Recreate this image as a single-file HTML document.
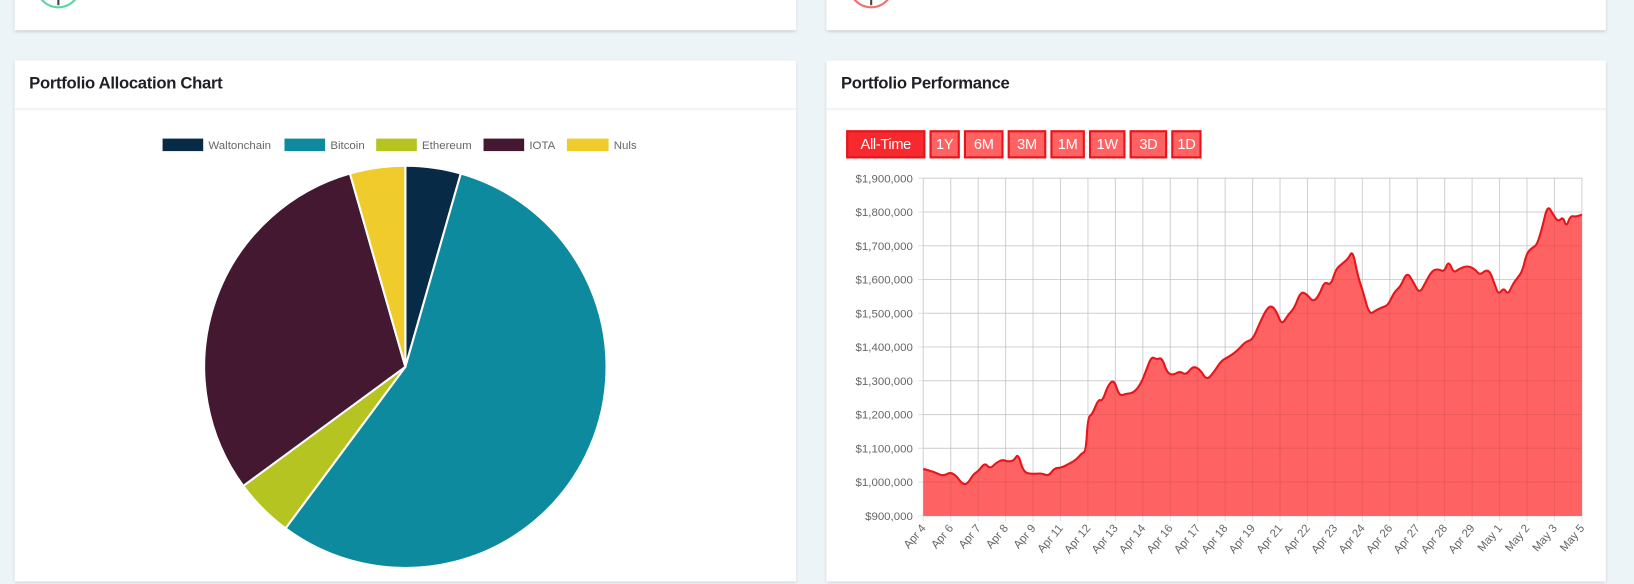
<!DOCTYPE html>
<html><head><meta charset="utf-8"><style>
html,body{margin:0;padding:0;width:1634px;height:545px;overflow:hidden;background:#edf4f8;}
#w{position:absolute;left:0;top:0;width:1568px;height:560px;transform:scale(1.04209);transform-origin:0 0;font-family:"Liberation Sans",sans-serif;}
.card{position:absolute;background:#fff;box-shadow:0 1px 3px rgba(0,0,0,.18);}
.hd{position:absolute;left:0;right:0;top:0;height:46px;border-bottom:1px solid #e8ecef;box-shadow:0 1px 2px rgba(0,0,0,.04);}
.hd span{position:absolute;left:14px;top:14px;font-weight:bold;font-size:16px;color:#1f1f26;letter-spacing:-0.3px;}
.btn{position:absolute;top:125px;height:27px;border:2px solid #e8141a;background:#ff6262;color:#fff;font-size:14px;line-height:23px;text-align:center;box-sizing:border-box;letter-spacing:-0.3px;}
</style></head><body><div id="w">
<div class="card" style="left:14px;top:-20px;width:750px;height:49px;overflow:hidden">
<svg width="120" height="49" style="position:absolute;left:0;top:0"><circle cx="42" cy="6" r="21" fill="none" stroke="#5bd6a0" stroke-width="2"/><rect x="41" y="20" width="2" height="5" fill="#444"/></svg></div>
<div class="card" style="left:793px;top:-20px;width:748px;height:49px;overflow:hidden">
<svg width="120" height="49" style="position:absolute;left:0;top:0"><circle cx="43" cy="6" r="21" fill="none" stroke="#f07070" stroke-width="2"/><rect x="42" y="20" width="2" height="5" fill="#444"/></svg></div>

<div class="card" style="left:14px;top:58px;width:750px;height:500px;overflow:hidden">
<div class="hd"><span>Portfolio Allocation Chart</span></div></div>
<div class="card" style="left:793px;top:58px;width:748px;height:500px;overflow:hidden">
<div class="hd"><span>Portfolio Performance</span></div></div>

<svg width="1568" height="560" style="position:absolute;left:0;top:0" font-family="Liberation Sans,sans-serif">
<g font-size="11" fill="#666">
<rect x="156" y="133" width="39" height="12" fill="#072a47"/><text x="200" y="143">Waltonchain</text>
<rect x="273" y="133" width="39" height="12" fill="#0e8a9f"/><text x="317" y="143">Bitcoin</text>
<rect x="361" y="133" width="39" height="12" fill="#b6c421"/><text x="405" y="143">Ethereum</text>
<rect x="464" y="133" width="39" height="12" fill="#431830"/><text x="508" y="143">IOTA</text>
<rect x="544" y="133" width="40" height="12" fill="#f0cb2c"/><text x="589" y="143">Nuls</text>
</g>
<g stroke="#fff" stroke-width="2">
<path d="M389 352 L389 159 A193 193 0 0 1 442.2 166.5 Z" fill="#072a47"/>
<path d="M389 352 L442.2 166.5 A193 193 0 1 1 274 507 Z" fill="#0e8a9f"/>
<path d="M389 352 L274 507 A193 193 0 0 1 233.4 466.3 Z" fill="#b6c421"/>
<path d="M389 352 L233.4 466.3 A193 193 0 0 1 335.8 166.5 Z" fill="#431830"/>
<path d="M389 352 L335.8 166.5 A193 193 0 0 1 389 159 Z" fill="#f0cb2c"/>
</g>

<g stroke="#e2e2e2" stroke-width="1" id="grid"></g>
<g id="ylab" font-size="11" fill="#666" text-anchor="end"></g>
<path id="area" fill="#ff6262"/>
<g id="grid2" stroke="rgba(0,0,0,0.07)" stroke-width="1"></g>
<path id="line" fill="none" stroke="#e8141a" stroke-width="2" stroke-linejoin="round"/>
<g id="xlab" font-size="11" fill="#666" text-anchor="end"></g>
</svg>
<div class="btn" style="left:812px;width:76px;background:#f5292e">All-Time</div>
<div class="btn" style="left:892px;width:29px">1Y</div>
<div class="btn" style="left:925px;width:38px">6M</div>
<div class="btn" style="left:967px;width:37px">3M</div>
<div class="btn" style="left:1008px;width:33px">1M</div>
<div class="btn" style="left:1045px;width:35px">1W</div>
<div class="btn" style="left:1084px;width:36px">3D</div>
<div class="btn" style="left:1124px;width:29px">1D</div>
</div>
<script>
var ns="http://www.w3.org/2000/svg";
function el(p,t,a,txt){var e=document.createElementNS(ns,t);for(var k in a)e.setAttribute(k,a[k]);if(txt)e.textContent=txt;document.getElementById(p).appendChild(e);}
var L=886,R=1518,T=171,B=495;
var yl=["$1,900,000","$1,800,000","$1,700,000","$1,600,000","$1,500,000","$1,400,000","$1,300,000","$1,200,000","$1,100,000","$1,000,000","$900,000"];
for(var i=0;i<11;i++){var y=T+i*(B-T)/10;el("grid","line",{x1:L-5,x2:R,y1:y,y2:y});el("grid2","line",{x1:L,x2:R,y1:y,y2:y});el("ylab","text",{x:L-10,y:y+4},yl[i]);}
var xl=["Apr 4","Apr 6","Apr 7","Apr 8","Apr 9","Apr 11","Apr 12","Apr 13","Apr 14","Apr 16","Apr 17","Apr 18","Apr 19","Apr 21","Apr 22","Apr 23","Apr 24","Apr 26","Apr 27","Apr 28","Apr 29","May 1","May 2","May 3","May 5"];
for(var i=0;i<25;i++){var x=L+i*(R-L)/24;el("grid","line",{x1:x,x2:x,y1:T,y2:B+5});el("grid2","line",{x1:x,x2:x,y1:T,y2:B});el("xlab","text",{x:x+3,y:B+12,transform:"rotate(-50 "+(x+3)+" "+(B+12)+")"},xl[i]);}
var p=[886,450,897,453,905,457,912,453,918,457,923,464,928,465,934,455,939,452,945,444,950,450,956,444,962,441,967,443,973,442,977,435,982,453,990,455,1000,454,1006,457,1012,449,1018,449,1026,445,1033,441,1038,435,1042,433,1044,400,1048,398,1054,383,1058,385,1063,370,1069,364,1074,380,1080,378,1088,377,1095,368,1100,355,1105,342,1110,345,1115,343,1120,358,1126,360,1132,356,1138,360,1145,351,1152,355,1158,365,1165,357,1172,346,1180,342,1188,336,1195,328,1202,326,1208,312,1215,297,1220,293,1225,299,1230,312,1236,302,1242,296,1248,280,1254,282,1260,290,1266,283,1271,270,1277,274,1282,258,1288,253,1294,248,1298,240,1303,265,1308,280,1314,302,1320,298,1326,295,1332,293,1338,280,1344,275,1350,261,1356,270,1362,282,1368,271,1374,260,1380,258,1386,261,1390,250,1395,262,1400,258,1408,255,1415,258,1420,264,1426,259,1430,261,1434,272,1438,283,1443,276,1447,283,1452,272,1456,267,1461,260,1465,243,1470,238,1475,235,1480,218,1485,197,1490,205,1495,213,1500,208,1503,218,1507,207,1512,208,1518,206];
var d="M"+p[0]+" "+p[1];
for(var i=2;i<p.length;i+=2){var mx=(p[i-2]+p[i])/2,my=(p[i-1]+p[i+1])/2;d+=" Q"+p[i-2]+" "+p[i-1]+" "+mx+" "+my;}
d+=" L"+p[p.length-2]+" "+p[p.length-1];
document.getElementById("line").setAttribute("d",d);
document.getElementById("area").setAttribute("d",d+" L"+R+" "+B+" L"+L+" "+B+" Z");
</script>
</body></html>
